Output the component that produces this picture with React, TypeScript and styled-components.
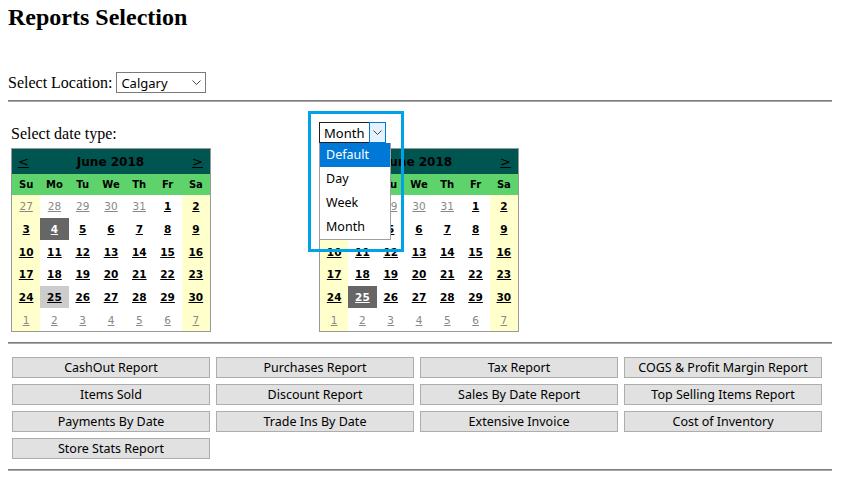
import React from 'react';
import styled, { createGlobalStyle } from 'styled-components';

const GlobalStyle = createGlobalStyle`
  body {
    margin: 0;
    background: #fff;
    color: #000;
    font-family: "Liberation Serif", "Times New Roman", serif;
  }
`;

const uiFont = `"Noto Sans", "Segoe UI", Tahoma, sans-serif`;
const calFont = `"DejaVu Sans", Verdana, sans-serif`;

const Page = styled.div`
  width: 824px;
  padding: 0 8px;
`;

const Title = styled.h2`
  margin: 4px 0 0;
  font-size: 24px;
  line-height: 27px;
  font-weight: bold;
`;

const LocationRow = styled.div`
  display: flex;
  align-items: center;
  gap: 4px;
  margin-top: 41px;
  font-size: 16px;
`;

const Select = styled.div<{ $width: number }>`
  box-sizing: border-box;
  width: ${p => p.$width}px;
  height: 21px;
  border: 1px solid #7a7a7a;
  display: flex;
  align-items: center;
  justify-content: space-between;
  padding: 0 4px 0 4px;
  font-family: ${uiFont};
  font-size: 13px;
  background: #fff;
`;

const Rule = styled.hr<{ $top: number }>`
  margin: ${p => p.$top}px 0 0;
  height: 0;
  border: 0;
  border-top: 1px solid #7c7c7c;
  border-bottom: 1px solid #a8a8a8;
`;

const DateSection = styled.div`
  display: flex;
  margin-top: 20px;
  padding-left: 3px;
`;

const DateColumn = styled.div<{ $width?: number }>`
  width: ${p => (p.$width ? `${p.$width}px` : 'auto')};
  display: flex;
  flex-direction: column;
`;

const ColumnHead = styled.div`
  height: 26px;
  box-sizing: border-box;
  padding-bottom: 5px;
  display: flex;
  align-items: flex-end;
  font-size: 16px;
  line-height: 18px;
`;

const SelectAnchor = styled.div`
  position: relative;
  align-self: flex-start;
`;

const TypeSelect = styled.div`
  display: flex;
  width: 67px;
  height: 21px;
  font-family: ${uiFont};
  font-size: 13px;
`;

const TypeValue = styled.div`
  flex: 1;
  box-sizing: border-box;
  border: 1px solid #1e1e1e;
  border-right: 0;
  padding-left: 4px;
  display: flex;
  align-items: center;
`;

const TypeArrow = styled.div`
  width: 17px;
  box-sizing: border-box;
  border: 1px solid #0078d7;
  background: #e5f1fb;
  display: flex;
  align-items: center;
  justify-content: center;
`;

const Dropdown = styled.ul`
  position: absolute;
  left: 0;
  top: 21px;
  width: 72px;
  box-sizing: border-box;
  margin: 0;
  padding: 0;
  list-style: none;
  border: 1px solid #a0a0a0;
  border-top: 0;
  background: #fff;
  font-family: ${uiFont};
  font-size: 12.5px;
  z-index: 2;
`;

const Option = styled.li<{ $active?: boolean }>`
  height: 24px;
  line-height: 24px;
  padding-left: 6px;
  background: ${p => (p.$active ? '#0078d7' : '#fff')};
  color: ${p => (p.$active ? '#fff' : '#000')};
`;

const FocusBox = styled.div`
  position: absolute;
  left: -11px;
  top: -11px;
  width: 96px;
  height: 141px;
  box-sizing: border-box;
  border: 3px solid #00a2e8;
  z-index: 3;
  pointer-events: none;
`;

const Calendar = styled.div`
  width: 200px;
  box-sizing: border-box;
  border: 1px solid #999;
  display: grid;
  grid-template-columns: repeat(7, 1fr);
  grid-template-rows: 25px 21px repeat(6, 22.67px);
  font-family: ${calFont};
`;

const CalHeader = styled.div`
  grid-column: 1 / -1;
  background: #005550;
  display: flex;
  align-items: center;
  justify-content: space-between;
  padding: 0 7px 0 6px;
  font-size: 12px;
  font-weight: bold;
`;

const NavLink = styled.span`
  text-decoration: underline;
  font-weight: normal;
  font-size: 13px;
`;

const DayName = styled.div`
  background: #5ed36b;
  display: flex;
  align-items: center;
  justify-content: center;
  font-size: 10px;
  font-weight: bold;
`;

const DayCell = styled.div<{ $bg: string; $fg: string; $bold: boolean }>`
  background: ${p => p.$bg};
  color: ${p => p.$fg};
  font-weight: ${p => (p.$bold ? 'bold' : 'normal')};
  font-size: 10.5px;
  display: flex;
  align-items: center;
  justify-content: center;
  text-decoration: underline;
`;

const ButtonGrid = styled.div`
  display: grid;
  grid-template-columns: repeat(4, 198px);
  gap: 6px;
  margin-top: 13px;
  padding-left: 4px;
`;

const ReportButton = styled.button`
  height: 21px;
  padding: 0;
  background: #e1e1e1;
  border: 1px solid #adadad;
  font-family: ${uiFont};
  font-size: 12.5px;
  color: #000;
`;

const Chevron = () => (
  <svg width="9" height="5" viewBox="0 0 9 5">
    <polyline points="0.5,0.5 4.5,4.5 8.5,0.5" fill="none" stroke="#444" strokeWidth="1" />
  </svg>
);

const dayNames = ['Su', 'Mo', 'Tu', 'We', 'Th', 'Fr', 'Sa'];

// June 2018, weeks starting Sunday
const weeks: { d: number; other: boolean }[][] = [
  [27, 28, 29, 30, 31].map(d => ({ d, other: true })).concat([1, 2].map(d => ({ d, other: false }))),
  [3, 4, 5, 6, 7, 8, 9].map(d => ({ d, other: false })),
  [10, 11, 12, 13, 14, 15, 16].map(d => ({ d, other: false })),
  [17, 18, 19, 20, 21, 22, 23].map(d => ({ d, other: false })),
  [24, 25, 26, 27, 28, 29, 30].map(d => ({ d, other: false })),
  [1, 2, 3, 4, 5, 6, 7].map(d => ({ d, other: true })),
];

const MonthCalendar: React.FC<{ selected: number; today: number }> = ({ selected, today }) => (
  <Calendar>
    <CalHeader>
      <NavLink>&lt;</NavLink>
      <span>June 2018</span>
      <NavLink>&gt;</NavLink>
    </CalHeader>
    {dayNames.map(n => (
      <DayName key={n}>{n}</DayName>
    ))}
    {weeks.flatMap((week, wi) =>
      week.map((day, di) => {
        const weekend = di === 0 || di === 6;
        const isSel = !day.other && day.d === selected;
        const isToday = !day.other && day.d === today;
        let bg = weekend ? '#ffffcc' : '#fff';
        let fg = day.other ? '#888' : '#000';
        if (isToday) bg = '#cccccc';
        if (isSel) {
          bg = '#666666';
          fg = '#fff';
        }
        return (
          <DayCell key={`${wi}-${di}`} $bg={bg} $fg={fg} $bold={!day.other}>
            {day.d}
          </DayCell>
        );
      })
    )}
  </Calendar>
);

const reports = [
  'CashOut Report',
  'Purchases Report',
  'Tax Report',
  'COGS & Profit Margin Report',
  'Items Sold',
  'Discount Report',
  'Sales By Date Report',
  'Top Selling Items Report',
  'Payments By Date',
  'Trade Ins By Date',
  'Extensive Invoice',
  'Cost of Inventory',
  'Store Stats Report',
];

export default function App() {
  return (
    <Page>
      <GlobalStyle />
      <Title>Reports Selection</Title>
      <LocationRow>
        <span>Select Location:</span>
        <Select $width={90}>
          <span>Calgary</span>
          <Chevron />
        </Select>
      </LocationRow>
      <Rule $top={7} />

      <DateSection>
        <DateColumn $width={308}>
          <ColumnHead>Select date type:</ColumnHead>
          <MonthCalendar selected={4} today={25} />
        </DateColumn>
        <DateColumn>
          <ColumnHead>
            <SelectAnchor>
              <TypeSelect>
                <TypeValue>Month</TypeValue>
                <TypeArrow>
                  <Chevron />
                </TypeArrow>
              </TypeSelect>
              <Dropdown>
                <Option $active>Default</Option>
                <Option>Day</Option>
                <Option>Week</Option>
                <Option>Month</Option>
              </Dropdown>
              <FocusBox />
            </SelectAnchor>
          </ColumnHead>
          <MonthCalendar selected={25} today={25} />
        </DateColumn>
      </DateSection>

      <Rule $top={10} />

      <ButtonGrid>
        {reports.map(r => (
          <ReportButton key={r}>{r}</ReportButton>
        ))}
      </ButtonGrid>

      <Rule $top={10} />
    </Page>
  );
}
